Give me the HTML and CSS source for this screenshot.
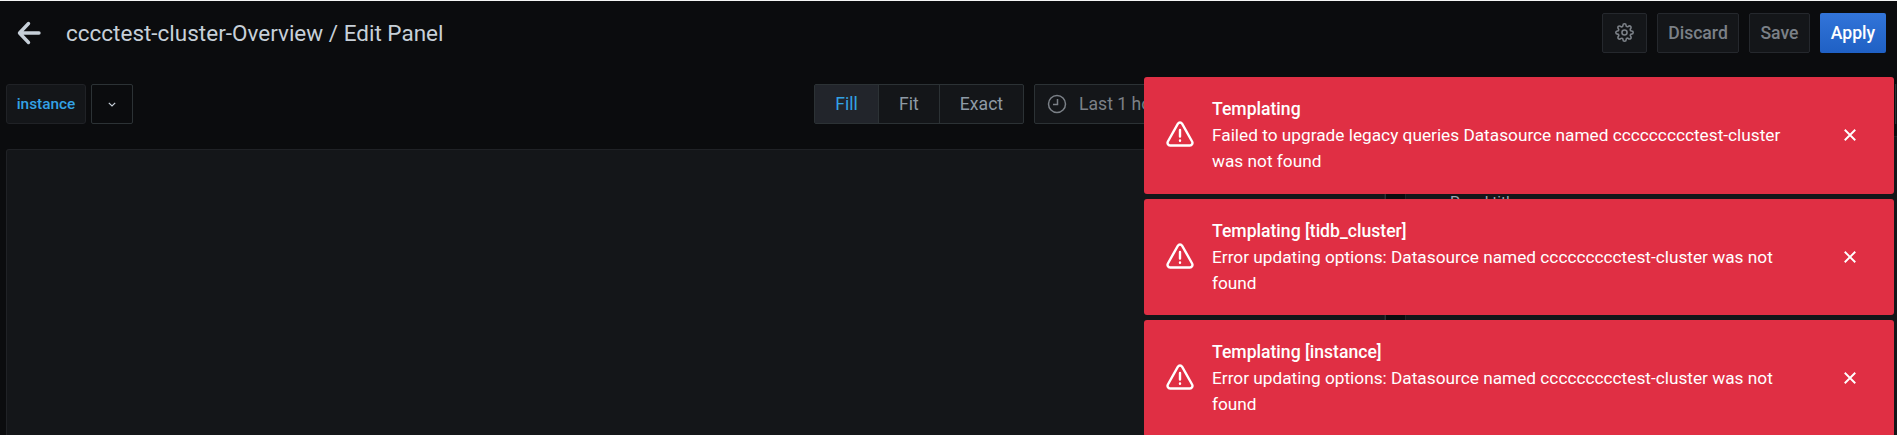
FILE: index.html
```html
<!DOCTYPE html>
<html lang="en">
<head>
  <meta charset="UTF-8">
  <title>cccctest-cluster-Overview / Edit Panel</title>
  <link rel="stylesheet" href="styles.css">
</head>
<body>
  <header class="navbar">
    <svg class="back-icon" viewBox="0 0 24 24"><path d="M22 12H3M11.500 2.500 2.500 12l9 9.500"/></svg>
    <div class="page-title">cccctest-cluster-Overview / Edit Panel</div>
    <div class="nav-actions">
      <button class="btn btn-icon">
        <svg class="gear-icon" viewBox="0 0 24 24"><circle cx="12" cy="12" r="3.200"/><path d="M19.400 15a1.650 1.650 0 0 0 .33 1.820l.06.06a2 2 0 0 1 0 2.830 2 2 0 0 1-2.830 0l-.06-.06a1.650 1.650 0 0 0-1.820-.33 1.650 1.650 0 0 0-1 1.510V21a2 2 0 0 1-2 2 2 2 0 0 1-2-2v-.09A1.650 1.650 0 0 0 9 19.400a1.650 1.650 0 0 0-1.820.33l-.06.06a2 2 0 0 1-2.830 0 2 2 0 0 1 0-2.830l.06-.06a1.650 1.650 0 0 0 .33-1.820 1.650 1.650 0 0 0-1.510-1H3a2 2 0 0 1-2-2 2 2 0 0 1 2-2h.09A1.650 1.650 0 0 0 4.600 9a1.650 1.650 0 0 0-.33-1.820l-.06-.06a2 2 0 0 1 0-2.830 2 2 0 0 1 2.830 0l.06.06a1.650 1.650 0 0 0 1.820.33H9a1.650 1.650 0 0 0 1-1.510V3a2 2 0 0 1 2-2 2 2 0 0 1 2 2v.09a1.650 1.650 0 0 0 1 1.510 1.650 1.650 0 0 0 1.820-.33l.06-.06a2 2 0 0 1 2.830 0 2 2 0 0 1 0 2.830l-.06.06a1.650 1.650 0 0 0-.33 1.820V9a1.650 1.650 0 0 0 1.510 1H21a2 2 0 0 1 2 2 2 2 0 0 1-2 2h-.09a1.650 1.650 0 0 0-1.510 1z"/></svg>
      </button>
      <button class="btn btn-discard">Discard</button>
      <button class="btn btn-save">Save</button>
      <button class="btn btn-apply">Apply</button>
    </div>
  </header>

  <div class="toolbar">
    <div class="var-group">
      <div class="var-label">instance</div>
      <div class="var-select">
        <svg class="chevron-icon" viewBox="0 0 8 5"><path d="M.8.8 4 4l3.200-3.200"/></svg>
      </div>
    </div>
    <div class="radio-group">
      <div class="radio-item radio-fill active">Fill</div>
      <div class="radio-item radio-fit">Fit</div>
      <div class="radio-item radio-exact">Exact</div>
    </div>
    <div class="time-picker">
      <svg class="clock-icon" viewBox="0 0 20 20"><circle cx="10" cy="10" r="8.500"/><path d="M10.500 5v5.500H6"/></svg>
      <span>Last 1 hour</span>
    </div>
    <div class="cut-btn"></div>
  </div>

  <main class="editor">
    <div class="panel-area">
      <div class="panel"></div>
    </div>
    <div class="resizer"></div>
    <aside class="options">
      <div class="options-title">Panel title</div>
    </aside>
  </main>

  <div class="toasts">
    <div class="toast">
      <svg class="warn-icon" viewBox="0 0 28 26"><path d="M14 1.500c-.9 0-1.700.5-2.200 1.300L1.900 20.500c-1 1.800.2 4 2.200 4h19.800c2 0 3.200-2.200 2.200-4L16.200 2.800c-.5-.8-1.300-1.300-2.200-1.300zM14 9v6.500M14 19.500v.3"/></svg>
      <div class="toast-text">
        <div class="toast-title">Templating</div>
        <div>Failed to upgrade legacy queries Datasource named ccccccccctest-cluster was not found</div>
      </div>
      <svg class="close-icon" viewBox="0 0 12 12"><path d="M1.500 1.500l9 9M10.500 1.500l-9 9"/></svg>
    </div>
    <div class="toast">
      <svg class="warn-icon" viewBox="0 0 28 26"><path d="M14 1.500c-.9 0-1.700.5-2.200 1.300L1.900 20.500c-1 1.800.2 4 2.200 4h19.800c2 0 3.200-2.200 2.200-4L16.200 2.800c-.5-.8-1.300-1.300-2.200-1.300zM14 9v6.500M14 19.500v.3"/></svg>
      <div class="toast-text">
        <div class="toast-title">Templating [tidb_cluster]</div>
        <div>Error updating options: Datasource named ccccccccctest-cluster was not found</div>
      </div>
      <svg class="close-icon" viewBox="0 0 12 12"><path d="M1.500 1.500l9 9M10.500 1.500l-9 9"/></svg>
    </div>
    <div class="toast">
      <svg class="warn-icon" viewBox="0 0 28 26"><path d="M14 1.500c-.9 0-1.700.5-2.200 1.300L1.900 20.500c-1 1.800.2 4 2.200 4h19.800c2 0 3.200-2.200 2.200-4L16.200 2.800c-.5-.8-1.300-1.300-2.200-1.300zM14 9v6.500M14 19.500v.3"/></svg>
      <div class="toast-text">
        <div class="toast-title">Templating [instance]</div>
        <div>Error updating options: Datasource named ccccccccctest-cluster was not found</div>
      </div>
      <svg class="close-icon" viewBox="0 0 12 12"><path d="M1.500 1.500l9 9M10.500 1.500l-9 9"/></svg>
    </div>
  </div>
</body>
</html>
```

FILE: styles.css
```css
* {
  box-sizing: border-box;
}
html, body {
  height: 100%;
}
body {
  margin: 0;
  overflow: hidden;
  display: flex;
  flex-direction: column;
  background: #0b0c0e;
  border-top: 1px solid #f4f5f5;
  color: #c7d0d9;
  font-family: Roboto, "Liberation Sans", sans-serif;
  font-size: 17.6px;
}

/* top bar */
.navbar {
  display: flex;
  align-items: center;
  height: 63px;
  padding: 0 11px 0 17px;
}
.back-icon {
  width: 24px;
  height: 24px;
  margin-right: 25px;
  fill: none;
  stroke: #c7d0d9;
  stroke-width: 3.400;
  stroke-linecap: round;
  stroke-linejoin: round;
}
.page-title {
  font-size: 22.500px;
  color: #c7d0d9;
}
.nav-actions {
  display: flex;
  gap: 10px;
  margin-left: auto;
}
.btn {
  height: 40px;
  padding: 0;
  border: 1px solid #25282d;
  border-radius: 2px;
  background: #141619;
  color: #7b8087;
  font-family: inherit;
  font-size: 17.6px;
  font-weight: 500;
}
.btn-icon {
  display: flex;
  align-items: center;
  justify-content: center;
  width: 45px;
}
.gear-icon {
  width: 19px;
  height: 19px;
  fill: none;
  stroke: #7b8087;
  stroke-width: 2;
}
.btn-discard {
  width: 82px;
}
.btn-save {
  width: 61px;
}
.btn-apply {
  width: 66px;
  border: none;
  background: linear-gradient(#3274d9, #1f60c4);
  color: #fff;
}

/* variables + display mode */
.toolbar {
  display: flex;
  align-items: center;
  height: 72px;
  padding: 8px 0 0 6px;
}
.var-group {
  display: flex;
  gap: 5px;
  margin-right: 681px;
}
.var-label {
  display: flex;
  align-items: center;
  justify-content: center;
  width: 80px;
  height: 40px;
  border: 1px solid #202226;
  border-radius: 3px;
  background: #141619;
  color: #33a2e5;
  font-size: 15.400px;
  font-weight: 500;
}
.var-select {
  display: flex;
  align-items: center;
  justify-content: center;
  width: 42px;
  height: 40px;
  border: 1px solid #2c3235;
  border-radius: 2px;
}
.chevron-icon {
  width: 8px;
  height: 5px;
  fill: none;
  stroke: #c7d0d9;
  stroke-width: 1.200;
}
.radio-group {
  display: flex;
  height: 40px;
  margin-right: 10px;
  border: 1px solid #2c3235;
  border-radius: 2px;
  background: #141619;
}
.radio-item {
  display: flex;
  align-items: center;
  justify-content: center;
  border-right: 1px solid #2c3235;
  color: #8e9aa5;
}
.radio-item:last-child {
  border-right: none;
}
.radio-item.active {
  background: #22252b;
  color: #33a2e5;
}
.radio-fill {
  width: 64px;
}
.radio-fit {
  width: 61px;
}
.radio-exact {
  width: 83px;
}
.time-picker {
  display: flex;
  align-items: center;
  gap: 12px;
  width: 351px;
  height: 40px;
  padding-left: 12px;
  border: 1px solid #2c3235;
  border-radius: 2px;
  background: #141619;
  color: #7b8087;
}
.clock-icon {
  width: 20px;
  height: 20px;
  fill: none;
  stroke: #7b8087;
  stroke-width: 1.500;
}
.cut-btn {
  width: 2px;
  height: 40px;
  margin-left: auto;
  border-left: 1px solid #2c3235;
  background: #141619;
}

/* panel and options pane */
.editor {
  display: flex;
  flex: 1;
}
.panel-area {
  display: flex;
  flex: none;
  width: 1385px;
  padding: 13px 0 0 6px;
}
.panel {
  flex: 1;
  border: 1px solid #202226;
  border-bottom: none;
  border-radius: 3px 3px 0 0;
  background: #141619;
}
.resizer {
  flex: none;
  width: 21px;
  border-right: 1px solid #202226;
  border-left: 1px solid #2c3235;
  background: #0b0c0e;
}
.options {
  flex: 1;
  padding: 56px 0 0 44px;
  border-top: 1px solid #202226;
  background: #141619;
}
.options-title {
  color: #9fa7b3;
  font-size: 15.400px;
}

/* alerts lying over the page */
.toasts {
  position: absolute;
  top: 77px;
  right: 3px;
  display: flex;
  flex-direction: column;
  gap: 5px;
  width: 750px;
}
.toast {
  display: flex;
  align-items: center;
  min-height: 116.500px;
  padding: 0 37px 0 22px;
  border-radius: 3px;
  background: #e02f44;
  color: #fff;
  font-size: 17.250px;
  line-height: 26px;
}
.warn-icon {
  flex: none;
  width: 28px;
  height: 26px;
  margin: 0 18px 2px 0;
  fill: none;
  stroke: #fff;
  stroke-width: 2.400;
  stroke-linecap: round;
  stroke-linejoin: round;
}
.toast-text {
  flex: 1;
  padding-right: 36px;
}
.toast-title {
  font-size: 17.6px;
  font-weight: 500;
}
.close-icon {
  flex: none;
  width: 14px;
  height: 14px;
  fill: none;
  stroke: #fff;
  stroke-width: 1.600;
}
```
